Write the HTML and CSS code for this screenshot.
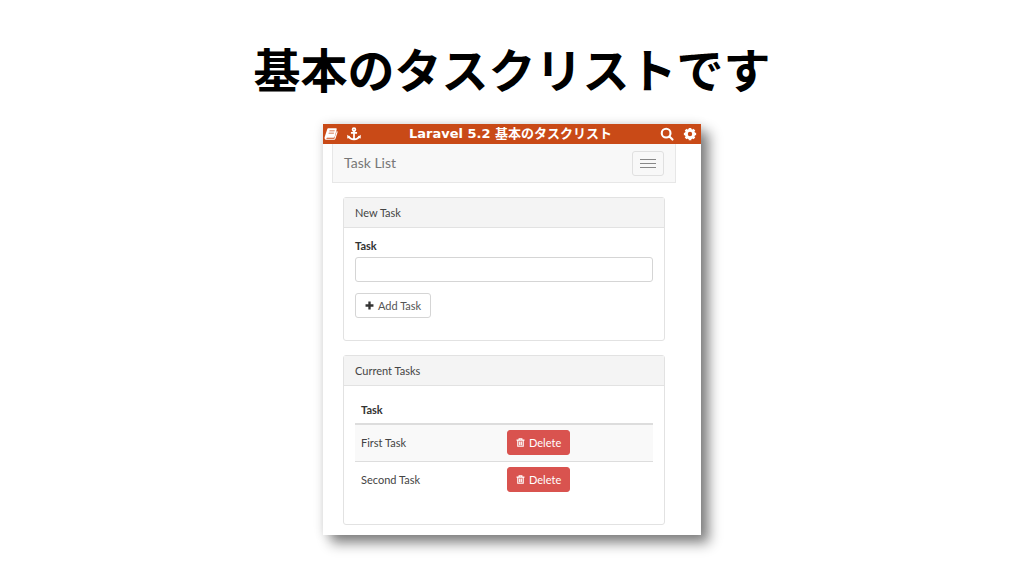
FILE: index.html
```html
<!DOCTYPE html>
<html lang="ja">
<head>
  <meta charset="UTF-8" />
  <meta name="viewport" content="width=device-width, initial-scale=1.0" />
  <title>基本のタスクリストです</title>
  <link rel="stylesheet" href="styles.css">
</head>
<body>
  <h1 class="headline">基本のタスクリストです</h1>

  <main class="window">
    <header class="topbar">
      <div class="topbar-icons">
        <svg class="icon" viewBox="0 0 16 16" aria-hidden="true">
          <path fill="currentColor" fill-rule="evenodd" d="M5.2 1.5h8.3c.8 0 1.2.6 1 1.3L12.200 11c-.2.8-.8 1.200-1.500 1.200H3.500c-1 0-1 1.300 0 1.300h8.300L14.600 4.500c.9.200 1.100.8.9 1.500l-2.400 7.500c-.3.8-.8 1.200-1.600 1.200H3.200C1 14.700.2 13 .8 11.400L3.500 3c.3-.9.9-1.500 1.700-1.500zM6.300 4l-.3.900h6l.3-.9zm-.8 2.500-.3.900h6l.3-.9z"/>
        </svg>
        <svg class="icon" viewBox="0 0 16 16" fill="none" stroke="currentColor" stroke-width="2" aria-hidden="true">
          <circle cx="8" cy="2.800" r="1.600"/>
          <path d="M8 4.500V14M4.500 6.800h7M1.800 10.500c1 2.500 3.200 3.700 6.200 3.700s5.200-1.200 6.200-3.700"/>
          <path fill="currentColor" stroke="none" d="M.3 13V8.800L4.500 12zM15.700 13V8.800L11.500 12z"/>
        </svg>
      </div>
      <h2 class="topbar-title">Laravel 5.2 基本のタスクリスト</h2>
      <div class="topbar-icons">
        <svg class="icon" viewBox="0 0 16 16" fill="none" stroke="currentColor" stroke-width="2.400" aria-hidden="true">
          <circle cx="7" cy="7" r="5"/>
          <path stroke-linecap="round" d="m10.800 10.800 3.500 3.500"/>
        </svg>
        <svg class="icon" viewBox="0 0 16 16" aria-hidden="true">
          <circle cx="8" cy="8" r="4.200" fill="none" stroke="currentColor" stroke-width="3.400"/>
          <path stroke="currentColor" stroke-width="3" d="M8 1v3M8 12v3M1 8h3M12 8h3M3 3l2 2M11 11l2 2M13 3l-2 2M5 11l-2 2"/>
        </svg>
      </div>
    </header>

    <div class="container">
      <nav class="navbar">
        <a class="brand" href="#">Task List</a>
        <button class="toggle" type="button" aria-label="Menu">
          <span class="bar"></span>
          <span class="bar"></span>
          <span class="bar"></span>
        </button>
      </nav>

      <section class="panel">
        <h3 class="panel-heading">New Task</h3>
        <form class="panel-body">
          <label class="label" for="task-name">Task</label>
          <input class="field" type="text" id="task-name" name="name">
          <button class="btn" type="button">
            <svg class="btn-icon" viewBox="0 0 10 10" aria-hidden="true"><path fill="#333" d="M3.700.6h2.600v3.100h3.100v2.600H6.300v3.100H3.700V6.300H.6V3.700h3.100z"/></svg>
            Add Task
          </button>
        </form>
      </section>

      <section class="panel">
        <h3 class="panel-heading">Current Tasks</h3>
        <div class="panel-body">
          <table class="tasks">
            <thead>
              <tr><th>Task</th><td></td></tr>
            </thead>
            <tbody>
              <tr>
                <td>First Task</td>
                <td>
                  <button class="btn btn-danger" type="button">
                    <svg class="btn-icon" viewBox="0 0 10 10" fill="none" stroke="currentColor" aria-hidden="true"><path stroke-width="1.300" d="M.6 2.300h8.800M3.500 2V.8h3V2M2 2.500v6.700h6V2.500M4.100 4v4M5.900 4v4"/></svg>
                    Delete
                  </button>
                </td>
              </tr>
              <tr>
                <td>Second Task</td>
                <td>
                  <button class="btn btn-danger" type="button">
                    <svg class="btn-icon" viewBox="0 0 10 10" fill="none" stroke="currentColor" aria-hidden="true"><path stroke-width="1.300" d="M.6 2.300h8.800M3.500 2V.8h3V2M2 2.500v6.700h6V2.500M4.100 4v4M5.900 4v4"/></svg>
                    Delete
                  </button>
                </td>
              </tr>
            </tbody>
          </table>
        </div>
      </section>
    </div>
  </main>
</body>
</html>
```

FILE: styles.css
```css
* {
  box-sizing: border-box;
}
body {
  margin: 0;
  padding: 34px 16px 40px;
  background: #fff;
  color: #444;
  font-family: Lato, "Noto Sans CJK JP", sans-serif;
  font-size: 11px;
  line-height: 16px;
}
.headline {
  margin: 0 0 22px;
  color: #000;
  font-family: "Noto Sans CJK JP", sans-serif;
  font-size: 47px;
  font-weight: 700;
  line-height: 68px;
  text-align: center;
}
.window {
  max-width: 378px;
  margin: 0 auto;
  padding-bottom: 10px;
  background: #fff;
  box-shadow: 8px 8px 12px rgba(0, 0, 0, 0.48), 0 0 10px rgba(0, 0, 0, 0.12);
}
.topbar {
  display: flex;
  align-items: center;
  justify-content: space-between;
  height: 20px;
  padding: 0 4px 0 1px;
  background: #c94a17;
  color: #fff;
}
.topbar-title {
  margin: 0;
  font-family: "DejaVu Sans", "Noto Sans CJK JP", sans-serif;
  font-size: 13px;
  font-weight: 700;
  line-height: 20px;
}
.topbar-icons {
  display: flex;
  gap: 9px;
}
.icon {
  width: 14px;
  height: 14px;
}
.container {
  padding: 0 25px 0 9px;
}
.navbar {
  display: flex;
  align-items: center;
  justify-content: space-between;
  height: 39px;
  padding: 0 11px;
  background: #f8f8f8;
  border: 1px solid #e7e7e7;
  border-top: 0;
}
.brand {
  color: #777;
  font-size: 14px;
  text-decoration: none;
}
.toggle {
  display: flex;
  flex-direction: column;
  align-items: center;
  justify-content: center;
  gap: 3px;
  width: 32px;
  height: 25px;
  padding: 0;
  background: transparent;
  border: 1px solid #e0e0e0;
  border-radius: 3px;
}
.bar {
  width: 16px;
  height: 1px;
  background: #888;
}
.panel {
  margin: 14px 11px 0;
  border: 1px solid #e2e2e2;
  border-radius: 3px;
}
.panel-heading {
  margin: 0;
  padding: 7px 11px;
  background: #f4f4f4;
  border-bottom: 1px solid #e2e2e2;
  font-size: 11px;
  font-weight: 400;
  line-height: 15px;
}
.panel-body {
  padding: 10px 11px 22px;
}
.label {
  display: block;
  margin-bottom: 3px;
  color: #333;
  font-weight: 700;
}
.field {
  display: block;
  width: 100%;
  height: 25px;
  margin-bottom: 11px;
  padding: 0 8px;
  border: 1px solid #d5d5d5;
  border-radius: 3px;
  font: inherit;
}
.btn {
  display: inline-flex;
  align-items: center;
  gap: 4px;
  height: 25px;
  padding: 0 9px;
  background: #fff;
  border: 1px solid #d5d5d5;
  border-radius: 3px;
  color: #555;
  font: inherit;
}
.btn-icon {
  width: 9px;
  height: 9px;
}
.btn-danger {
  padding: 0 8px;
  background: #d9534f;
  border-color: #d9534f;
  color: #fff;
}
.tasks {
  width: 100%;
  margin-bottom: 4px;
  border-collapse: collapse;
  text-align: left;
}
.tasks th,
.tasks td {
  width: 49%;
  height: 37px;
  padding: 0 6px;
  border-top: 1px solid #ddd;
}
.tasks td + td {
  width: 51%;
}
.tasks thead th,
.tasks thead td {
  height: 28px;
  border-top: 0;
  border-bottom: 2px solid #ddd;
  color: #333;
}
.tasks tbody tr:first-child {
  background: #f9f9f9;
}
```
